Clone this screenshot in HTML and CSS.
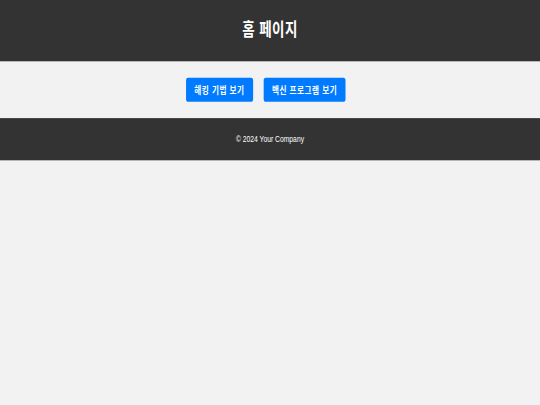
FILE: index.html
```html
<!DOCTYPE html>
<html lang="ko">
<head>
<meta charset="utf-8">
<title>홈 페이지</title>
<link rel="stylesheet" href="styles.css">
</head>
<body>
<div class="viewport">
  <div class="page">
    <header class="site-header">
      <h1 class="title">홈 페이지</h1>
    </header>
    <main class="content">
      <nav class="actions">
        <a class="btn" href="#">해킹 기법 보기</a>
        <a class="btn" href="#">백신 프로그램 보기</a>
      </nav>
    </main>
    <footer class="site-footer">
      <p class="copy">© 2024 Your Company</p>
    </footer>
  </div>
</div>
</body>
</html>
```

FILE: styles.css
```css
html, body {
  margin: 0;
  padding: 0;
  overflow: hidden;
  background: #f2f2f2;
}

.viewport {
  width: 540px;
  height: 405px;
  overflow: hidden;
}

.page {
  width: 1280px;
  height: 720px;
  transform: scale(0.421875, 0.5625);
  transform-origin: 0 0;
  background: #f2f2f2;
  font-family: "Noto Sans CJK KR", "Liberation Sans", sans-serif;
}

.site-header {
  background: #333333;
  color: #ffffff;
  text-align: center;
  padding: 0 0 9px;
}

.title {
  margin: 0;
  font-size: 32px;
  font-weight: 700;
  letter-spacing: 1px;
  line-height: 100px;
}

.content {
  padding: 29px 0;
}

.actions {
  display: flex;
  justify-content: center;
  gap: 25px;
  padding-right: 20px;
}

.btn {
  display: block;
  background: #007bff;
  color: #ffffff;
  text-decoration: none;
  font-size: 18px;
  font-weight: 700;
  letter-spacing: 1.2px;
  line-height: 23px;
  padding: 10px 20px;
  border-radius: 5px;
}

.site-footer {
  background: #333333;
  color: #ffffff;
  text-align: center;
  padding: 28px 0 29px;
}

.copy {
  margin: 0;
  font-family: "Liberation Sans", Arial, sans-serif;
  font-size: 16px;
  line-height: 18px;
}
```
